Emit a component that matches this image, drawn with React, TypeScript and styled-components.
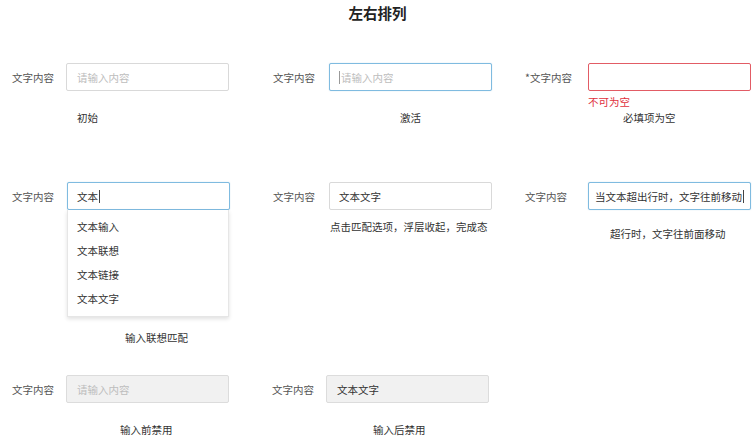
import styled, { createGlobalStyle, css } from 'styled-components';

const GlobalStyle = createGlobalStyle`
  body {
    margin: 0;
    background: #ffffff;
    font-family: 'Noto Sans CJK SC', 'Noto Sans', sans-serif;
    color: #333;
  }
`;

const Page = styled.div`
  width: 755px;
  height: 441px;
  padding-top: 4px;
  box-sizing: border-box;
  overflow: hidden;
`;

const Title = styled.h1`
  margin: 0;
  height: 18px;
  line-height: 18px;
  font-size: 14.5px;
  font-weight: 700;
  text-align: center;
  color: #222;
`;

const Row = styled.div<{ top: number }>`
  display: grid;
  grid-template-columns: 260px 245px 250px;
  align-items: start;
  margin-top: ${p => p.top}px;
`;

const Cell = styled.div`
  display: flex;
  flex-direction: column;
`;

const Field = styled.div<{ left: number; labelWidth: number }>`
  display: flex;
  align-items: center;
  padding-left: ${p => p.left}px;

  & > label {
    width: ${p => p.labelWidth}px;
  }
`;

const Label = styled.label`
  flex-shrink: 0;
  font-size: 10.5px;
  color: #555;
  white-space: nowrap;
`;

type BoxState = 'normal' | 'focus' | 'error' | 'disabled';

const Box = styled.div<{ state: BoxState; pad?: number }>`
  width: 163px;
  height: 28px;
  box-sizing: border-box;
  border-radius: 2px;
  border: 1px solid #d9d9d9;
  padding-left: ${p => p.pad ?? 10}px;
  display: flex;
  align-items: center;
  font-size: 10.5px;
  color: #333;
  white-space: nowrap;
  overflow: hidden;
  background: #fff;

  ${p => p.state === 'focus' && css`
    border-color: #7fbbe0;
    box-shadow: 0 0 1px rgba(90, 160, 210, 0.5);
  `}
  ${p => p.state === 'error' && css`
    border-color: #e25c65;
  `}
  ${p => p.state === 'disabled' && css`
    background: #f1f1f1;
    border-color: #dcdcdc;
  `}
`;

const Placeholder = styled.span`
  color: #bdbdbd;
`;

const Caret = styled.span<{ light?: boolean }>`
  display: inline-block;
  width: 1px;
  height: 13px;
  background: ${p => (p.light ? '#999' : '#444')};
  margin: 0 1px;
`;

const Note = styled.div<{ top: number; left: number; tone?: 'error' }>`
  margin-top: ${p => p.top}px;
  padding-left: ${p => p.left}px;
  height: 14px;
  line-height: 14px;
  font-size: 10.5px;
  color: ${p => (p.tone === 'error' ? '#e0303c' : '#333')};
  white-space: nowrap;
`;

const Dropdown = styled.ul`
  list-style: none;
  margin: 0 0 0 67px;
  padding: 5px 0;
  width: 162px;
  box-sizing: border-box;
  background: #fff;
  border: 1px solid #e6e6e6;
  border-top: none;
  box-shadow: 0 2px 4px rgba(0, 0, 0, 0.12);
`;

const Option = styled.li`
  height: 24px;
  line-height: 24px;
  padding-left: 9px;
  font-size: 10.5px;
  color: #333;
`;

const options = ['文本输入', '文本联想', '文本链接', '文本文字'];

export default function App() {
  return (
    <Page>
      <GlobalStyle />
      <Title>左右排列</Title>

      <Row top={41}>
        <Cell>
          <Field left={12} labelWidth={54}>
            <Label>文字内容</Label>
            <Box state="normal">
              <Placeholder>请输入内容</Placeholder>
            </Box>
          </Field>
          <Note top={20} left={77}>初始</Note>
        </Cell>
        <Cell>
          <Field left={13} labelWidth={56}>
            <Label>文字内容</Label>
            <Box state="focus" pad={8}>
              <Caret light />
              <Placeholder>请输入内容</Placeholder>
            </Box>
          </Field>
          <Note top={20} left={140}>激活</Note>
        </Cell>
        <Cell>
          <Field left={20} labelWidth={63}>
            <Label>*文字内容</Label>
            <Box state="error" />
          </Field>
          <Note top={4} left={83} tone="error">不可为空</Note>
          <Note top={2} left={118}>必填项为空</Note>
        </Cell>
      </Row>

      <Row top={57}>
        <Cell>
          <Field left={12} labelWidth={55}>
            <Label>文字内容</Label>
            <Box state="focus" pad={9}>
              文本
              <Caret />
            </Box>
          </Field>
          <Dropdown>
            {options.map(o => (
              <Option key={o}>{o}</Option>
            ))}
          </Dropdown>
          <Note top={14} left={125}>输入联想匹配</Note>
        </Cell>
        <Cell>
          <Field left={13} labelWidth={56}>
            <Label>文字内容</Label>
            <Box state="normal" pad={9}>文本文字</Box>
          </Field>
          <Note top={10} left={70}>点击匹配选项，浮层收起，完成态</Note>
        </Cell>
        <Cell>
          <Field left={20} labelWidth={63}>
            <Label>文字内容</Label>
            <Box state="focus" pad={6}>
              当文本超出行时，文字往前移动
              <Caret />
            </Box>
          </Field>
          <Note top={17} left={105}>超行时，文字往前面移动</Note>
        </Cell>
      </Row>

      <Row top={30}>
        <Cell>
          <Field left={12} labelWidth={54}>
            <Label>文字内容</Label>
            <Box state="disabled">
              <Placeholder>请输入内容</Placeholder>
            </Box>
          </Field>
          <Note top={20} left={120}>输入前禁用</Note>
        </Cell>
        <Cell>
          <Field left={12} labelWidth={54}>
            <Label>文字内容</Label>
            <Box state="disabled">文本文字</Box>
          </Field>
          <Note top={20} left={113}>输入后禁用</Note>
        </Cell>
        <Cell />
      </Row>
    </Page>
  );
}
